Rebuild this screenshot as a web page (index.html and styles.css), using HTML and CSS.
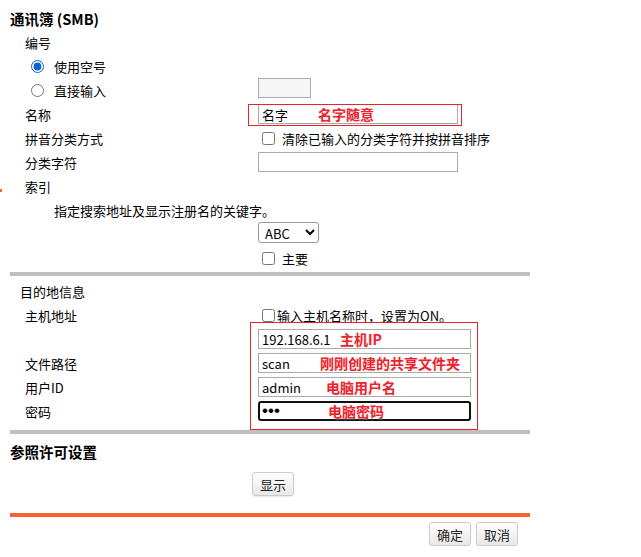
FILE: index.html
```html
<!DOCTYPE html>
<html lang="zh-CN">
<head>
<meta charset="UTF-8">
<title>通讯簿 (SMB)</title>
<link rel="stylesheet" href="styles.css">
</head>
<body>
<div class="page">
  <div class="row title-row"><h2 class="title">通讯簿 (SMB)</h2></div>

  <div class="row"><span class="label">编号</span></div>
  <div class="row">
    <label class="label radio"><input type="radio" name="num" checked> 使用空号</label>
  </div>
  <div class="row">
    <label class="label radio"><input type="radio" name="num"> 直接输入</label>
    <div class="field"><input type="text" class="small-input" disabled></div>
  </div>

  <div class="row">
    <span class="label">名称</span>
    <div class="field">
      <span class="mark-box name-mark"></span>
      <input type="text" class="text-input" value="名字">
      <span class="note name-note">名字随意</span>
    </div>
  </div>
  <div class="row">
    <span class="label">拼音分类方式</span>
    <label class="field check"><input type="checkbox"> 清除已输入的分类字符并按拼音排序</label>
  </div>
  <div class="row">
    <span class="label">分类字符</span>
    <div class="field"><input type="text" class="text-input"></div>
  </div>
  <div class="row">
    <span class="edge"></span>
    <span class="label">索引</span>
  </div>
  <div class="row"><span class="hint">指定搜索地址及显示注册名的关键字。</span></div>
  <div class="row">
    <span class="label"></span>
    <div class="field">
      <select class="select">
        <option>ABC</option>
      </select>
    </div>
  </div>
  <div class="row">
    <span class="label"></span>
    <label class="field check"><input type="checkbox"> 主要</label>
  </div>

  <div class="divider"></div>

  <div class="dest">
    <div class="row"><span class="label sub-head">目的地信息</span></div>
    <div class="row">
      <span class="label">主机地址</span>
      <label class="field check tight"><input type="checkbox">输入主机名称时，设置为ON。</label>
    </div>
    <div class="row">
      <span class="label"></span>
      <div class="field">
        <input type="text" class="text-input wide" value="192.168.6.1">
        <span class="note ip-note">主机IP</span>
      </div>
    </div>
    <div class="row">
      <span class="label">文件路径</span>
      <div class="field">
        <input type="text" class="text-input wide" value="scan">
        <span class="note path-note">刚刚创建的共享文件夹</span>
      </div>
    </div>
    <div class="row">
      <span class="label">用户ID</span>
      <div class="field">
        <input type="text" class="text-input wide" value="admin">
        <span class="note user-note">电脑用户名</span>
      </div>
    </div>
    <div class="row">
      <span class="label">密码</span>
      <div class="field">
        <input type="password" class="text-input wide focused" value="abc">
        <span class="note pass-note">电脑密码</span>
      </div>
    </div>
    <span class="mark-box dest-mark"></span>
  </div>

  <div class="divider lower"></div>

  <div class="row title-row"><h2 class="title">参照许可设置</h2></div>
  <div class="show-line"><button type="button" class="btn">显示</button></div>

  <div class="orange-bar"></div>

  <div class="actions">
    <button type="button" class="btn">确定</button>
    <button type="button" class="btn">取消</button>
  </div>
</div>
</body>
</html>
```

FILE: styles.css
```css
body {
  margin: 0;
  background: #fff;
  color: #000;
  font-family: "Noto Sans CJK SC", "Noto Sans", sans-serif;
  font-size: 13px;
}

.page {
  width: 520px;
  padding: 6px 0 0 10px;
}

.row {
  position: relative;
  display: flex;
  align-items: center;
  height: 24px;
}

.title {
  margin: 0;
  font-size: 14.5px;
  font-weight: bold;
}

.label {
  display: flex;
  align-items: center;
  width: 233px;
  padding-left: 15px;
  flex-shrink: 0;
}

.sub-head {
  padding-left: 10px;
  width: 238px;
}

.radio {
  padding-left: 21px;
  width: 227px;
}

.radio input {
  margin: 0 10px 0 0;
  width: 13px;
  height: 13px;
  accent-color: #0a64d6;
}

.hint {
  padding-left: 44px;
}

.field {
  position: relative;
  display: flex;
  align-items: center;
}

.check input {
  margin: 0 7px 0 4px;
  width: 13px;
  height: 13px;
}

.tight input {
  margin-right: 2px;
}

.small-input {
  width: 53px;
  height: 20px;
  box-sizing: border-box;
  border: 1px solid #aaa;
  background: #f6f6f6;
  margin: 0 0 4px 0;
}

.text-input {
  width: 200px;
  height: 20px;
  box-sizing: border-box;
  border: 1px solid #aaa;
  padding: 0 3px;
  font-family: inherit;
  font-size: 13px;
  color: #000;
  outline: none;
}

.text-input.wide {
  width: 213px;
}

/* password field has keyboard focus */
.text-input.focused {
  border: 2px solid #111;
  border-radius: 3px;
  padding: 0 2px;
  font-family: "Liberation Sans", Arial, sans-serif;
  font-size: 17px;
}

.select {
  width: 61px;
  height: 21px;
  margin-bottom: 3px;
  border: 1px solid #999;
  border-radius: 3px;
  background: #fff;
  font-family: inherit;
  font-size: 13px;
  padding: 0 2px;
}

.note {
  position: absolute;
  top: 0;
  color: #e8242c;
  font-weight: bold;
  font-size: 14px;
  text-shadow: 0 0 1px #fff, 0 0 2px #ffd0d0;
  white-space: nowrap;
}

.name-note { left: 60px; }
.ip-note { left: 82px; }
.path-note { left: 62px; }
.user-note { left: 68px; }
.pass-note { left: 70px; }

.mark-box {
  position: absolute;
  border: 1px solid #e5242b;
  pointer-events: none;
}

.name-mark {
  left: -10px;
  top: 0;
  width: 212px;
  height: 20px;
}

.dest {
  position: relative;
}

.dest-mark {
  left: 240px;
  top: 43px;
  width: 226px;
  height: 106px;
}

.edge {
  position: absolute;
  left: -10px;
  top: 15px;
  width: 2px;
  height: 3px;
  background: #f96232;
}

.divider {
  height: 4px;
  background: #c0c0c0;
  margin: 2px 0 3px;
}

.divider.lower {
  margin: 7px 0 5px;
}

.show-line {
  padding: 9px 0 0 242px;
  height: 41px;
}

.btn {
  font-family: inherit;
  font-size: 13px;
  color: #222;
  padding: 0 7px;
  height: 24px;
  border: 1px solid #ccc;
  border-radius: 3px;
  background: linear-gradient(#ffffff, #e8e8e8);
  box-shadow: 0 1px 1px rgba(0, 0, 0, 0.08);
}

.orange-bar {
  height: 4px;
  background: #f96232;
}

.actions {
  display: flex;
  justify-content: flex-end;
  gap: 5px;
  padding: 5px 12px 0 0;
}
```
